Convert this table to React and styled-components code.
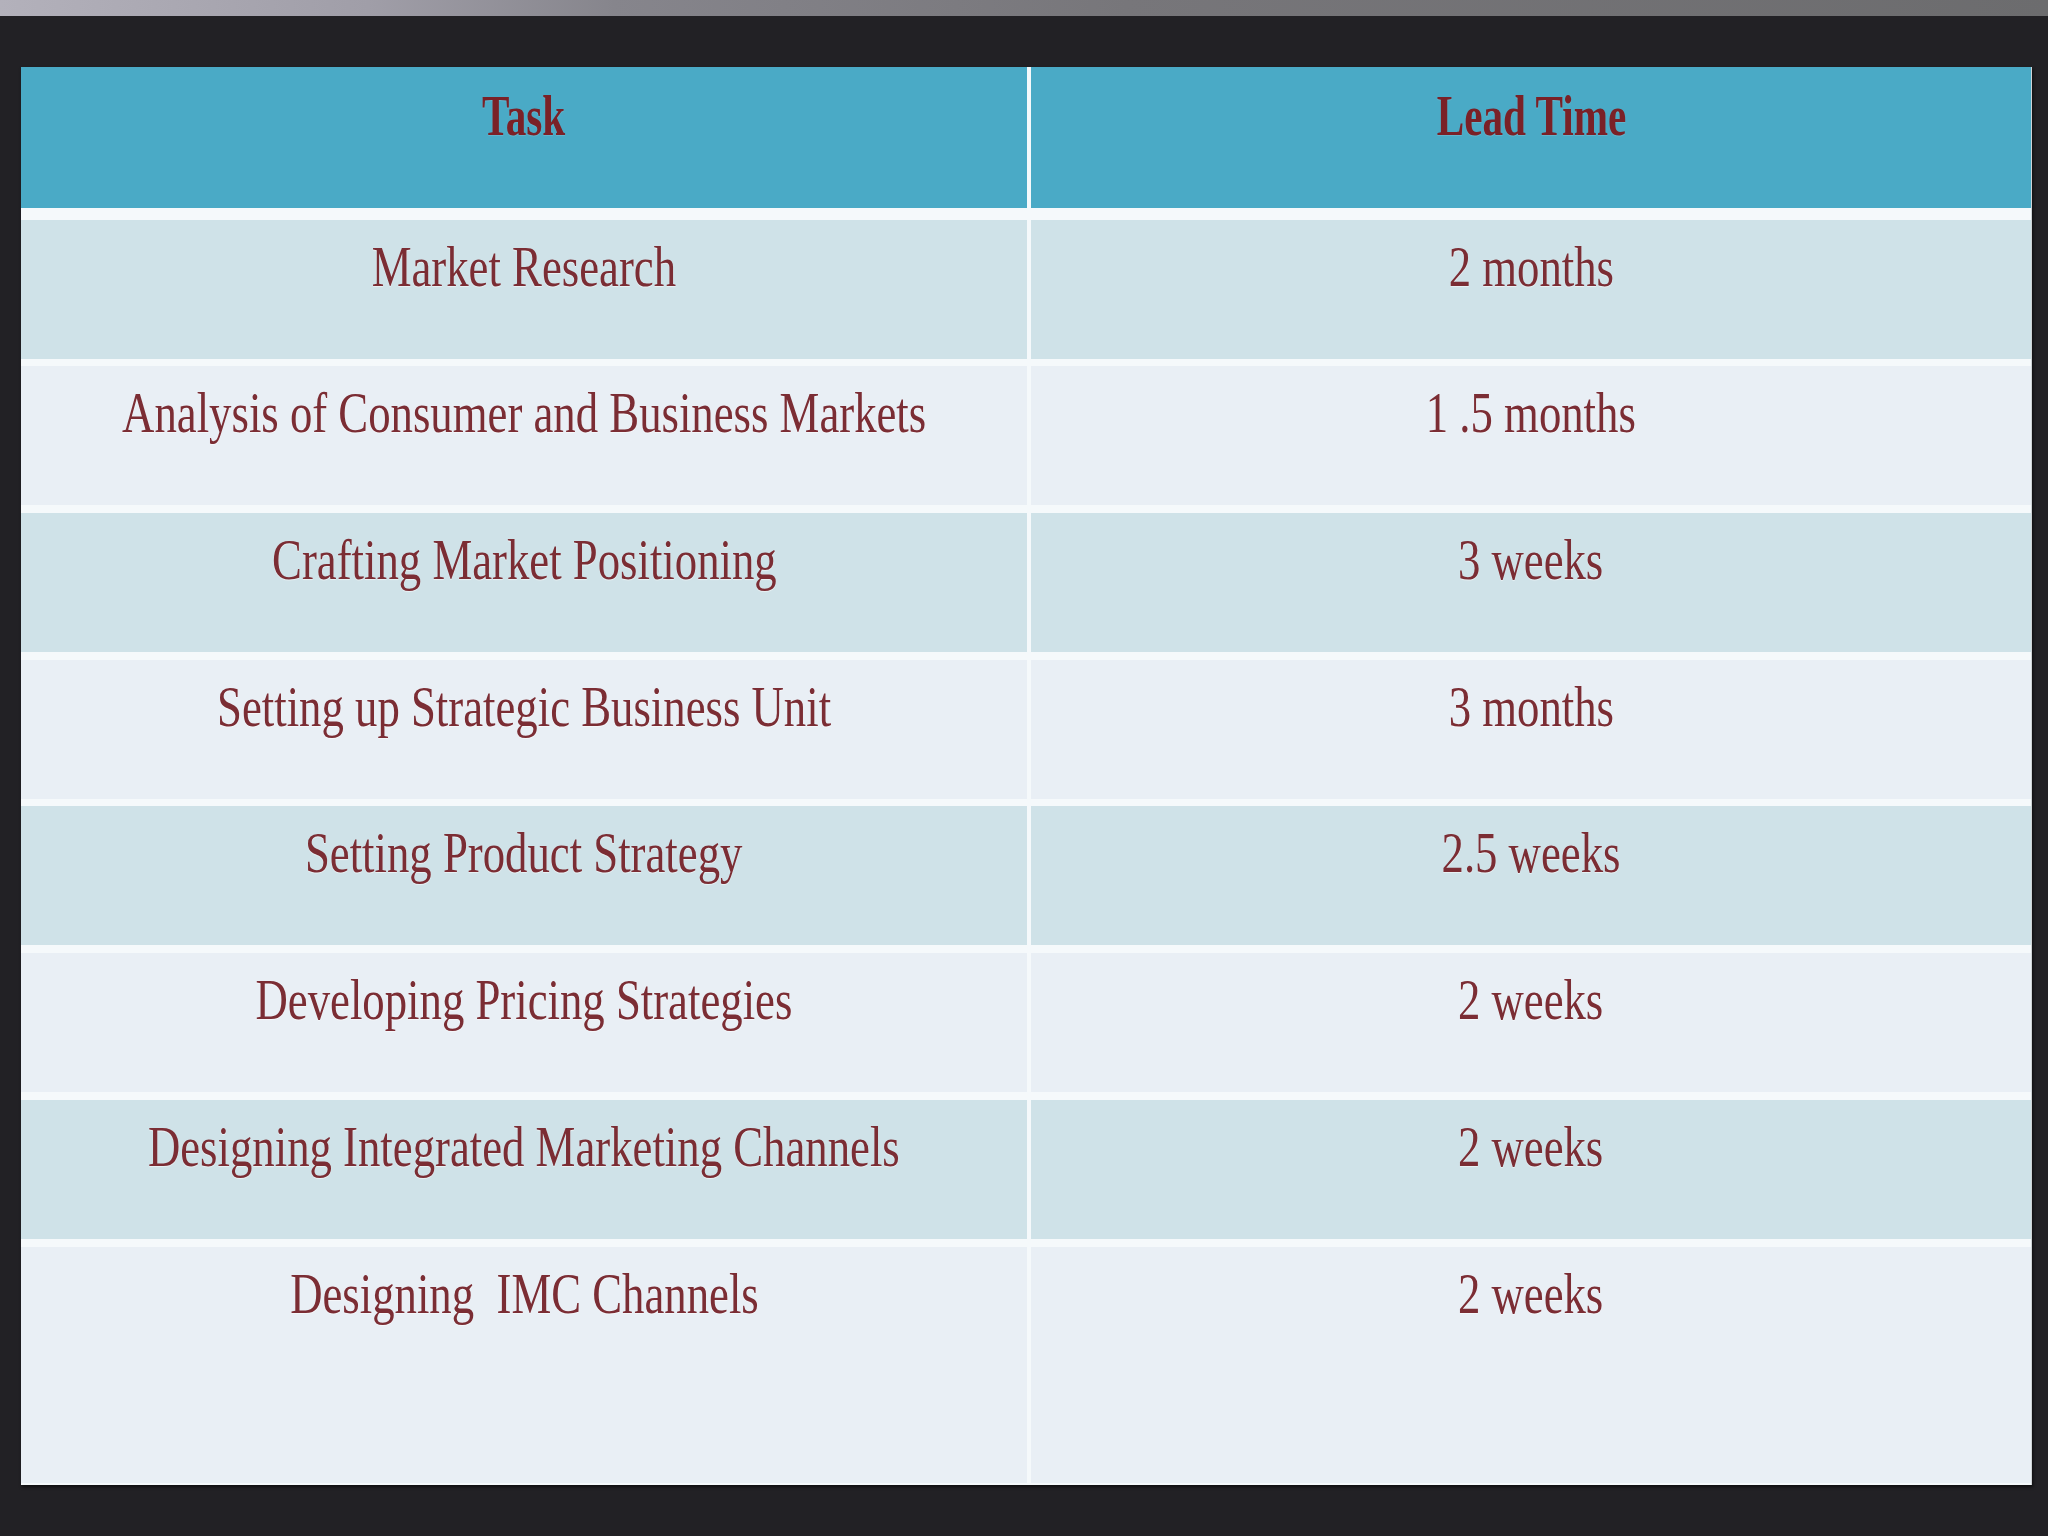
import React from 'react'
import styled, { createGlobalStyle } from 'styled-components'

const GlobalStyle = createGlobalStyle`
  html, body {
    margin: 0;
    padding: 0;
    background: #222125;
  }
  body {
    font-family: "Liberation Serif", "Times New Roman", serif;
  }
`

const Screen = styled.div`
  width: 2048px;
  height: 1536px;
  background: #222125;
  overflow: hidden;
`

const TopStrip = styled.div`
  height: 16px;
  background: linear-gradient(90deg, #b3b1bb 0%, #a09ea8 18%, #86858c 30%, #77767a 55%, #6c6c6e 100%);
`

const Stage = styled.div`
  padding: 51px 16px 0 21px;
`

const Table = styled.div`
  display: flex;
  flex-direction: column;
  gap: 7.7px;
  background: #f5f9fb;
  padding-bottom: 2px;
  box-shadow: 1px 2px 3px rgba(0, 0, 0, 0.6);
  border-right: 1px solid #cfd3d6;
`

const Row = styled.div`
  display: grid;
  grid-template-columns: 1006px 1000px;
  column-gap: 4px;
  height: ${p => p.$height || 139}px;
  margin-bottom: ${p => p.$after || 0}px;
`

const Cell = styled.div`
  display: flex;
  justify-content: center;
  align-items: flex-start;
  padding-top: ${p => (p.$head ? 20 : 18)}px;
  background: ${p => (p.$head ? '#4aaac6' : p.$tone === 'odd' ? '#cfe2e8' : '#e9eff5')};
  box-sizing: border-box;
`

const Label = styled.span`
  display: inline-block;
  white-space: pre;
  line-height: 1;
  font-family: "Liberation Serif", "Times New Roman", serif;
  font-size: ${p => (p.$head ? 58 : 57)}px;
  font-weight: ${p => (p.$head ? 700 : 400)};
  color: ${p => (p.$head ? '#7a2127' : '#7b2d34')};
  transform: scaleX(${p => (p.$head ? 0.71 : 0.785)});
  transform-origin: center top;
  text-shadow: 0 1px 1px rgba(255, 255, 255, ${p => (p.$head ? 0.15 : 0.55)});
`

const rows = [
  ['Market Research', '2 months'],
  ['Analysis of Consumer and Business Markets', '1 .5 months'],
  ['Crafting Market Positioning', '3 weeks'],
  ['Setting up Strategic Business Unit', '3 months'],
  ['Setting Product Strategy', '2.5 weeks'],
  ['Developing Pricing Strategies', '2 weeks'],
  ['Designing Integrated Marketing Channels', '2 weeks'],
  ['Designing  IMC Channels', '2 weeks'],
]

export default function App() {
  return (
    <Screen>
      <GlobalStyle />
      <TopStrip />
      <Stage>
        <Table>
          <Row $height={141} $after={4}>
            <Cell $head><Label $head>Task</Label></Cell>
            <Cell $head><Label $head>Lead Time</Label></Cell>
          </Row>
          {rows.map(([task, time], i) => {
            const tone = i % 2 === 0 ? 'odd' : 'even'
            const last = i === rows.length - 1
            return (
              <Row key={task} $height={last ? 236 : 139}>
                <Cell $tone={tone}><Label>{task}</Label></Cell>
                <Cell $tone={tone}><Label>{time}</Label></Cell>
              </Row>
            )
          })}
        </Table>
      </Stage>
    </Screen>
  )
}
